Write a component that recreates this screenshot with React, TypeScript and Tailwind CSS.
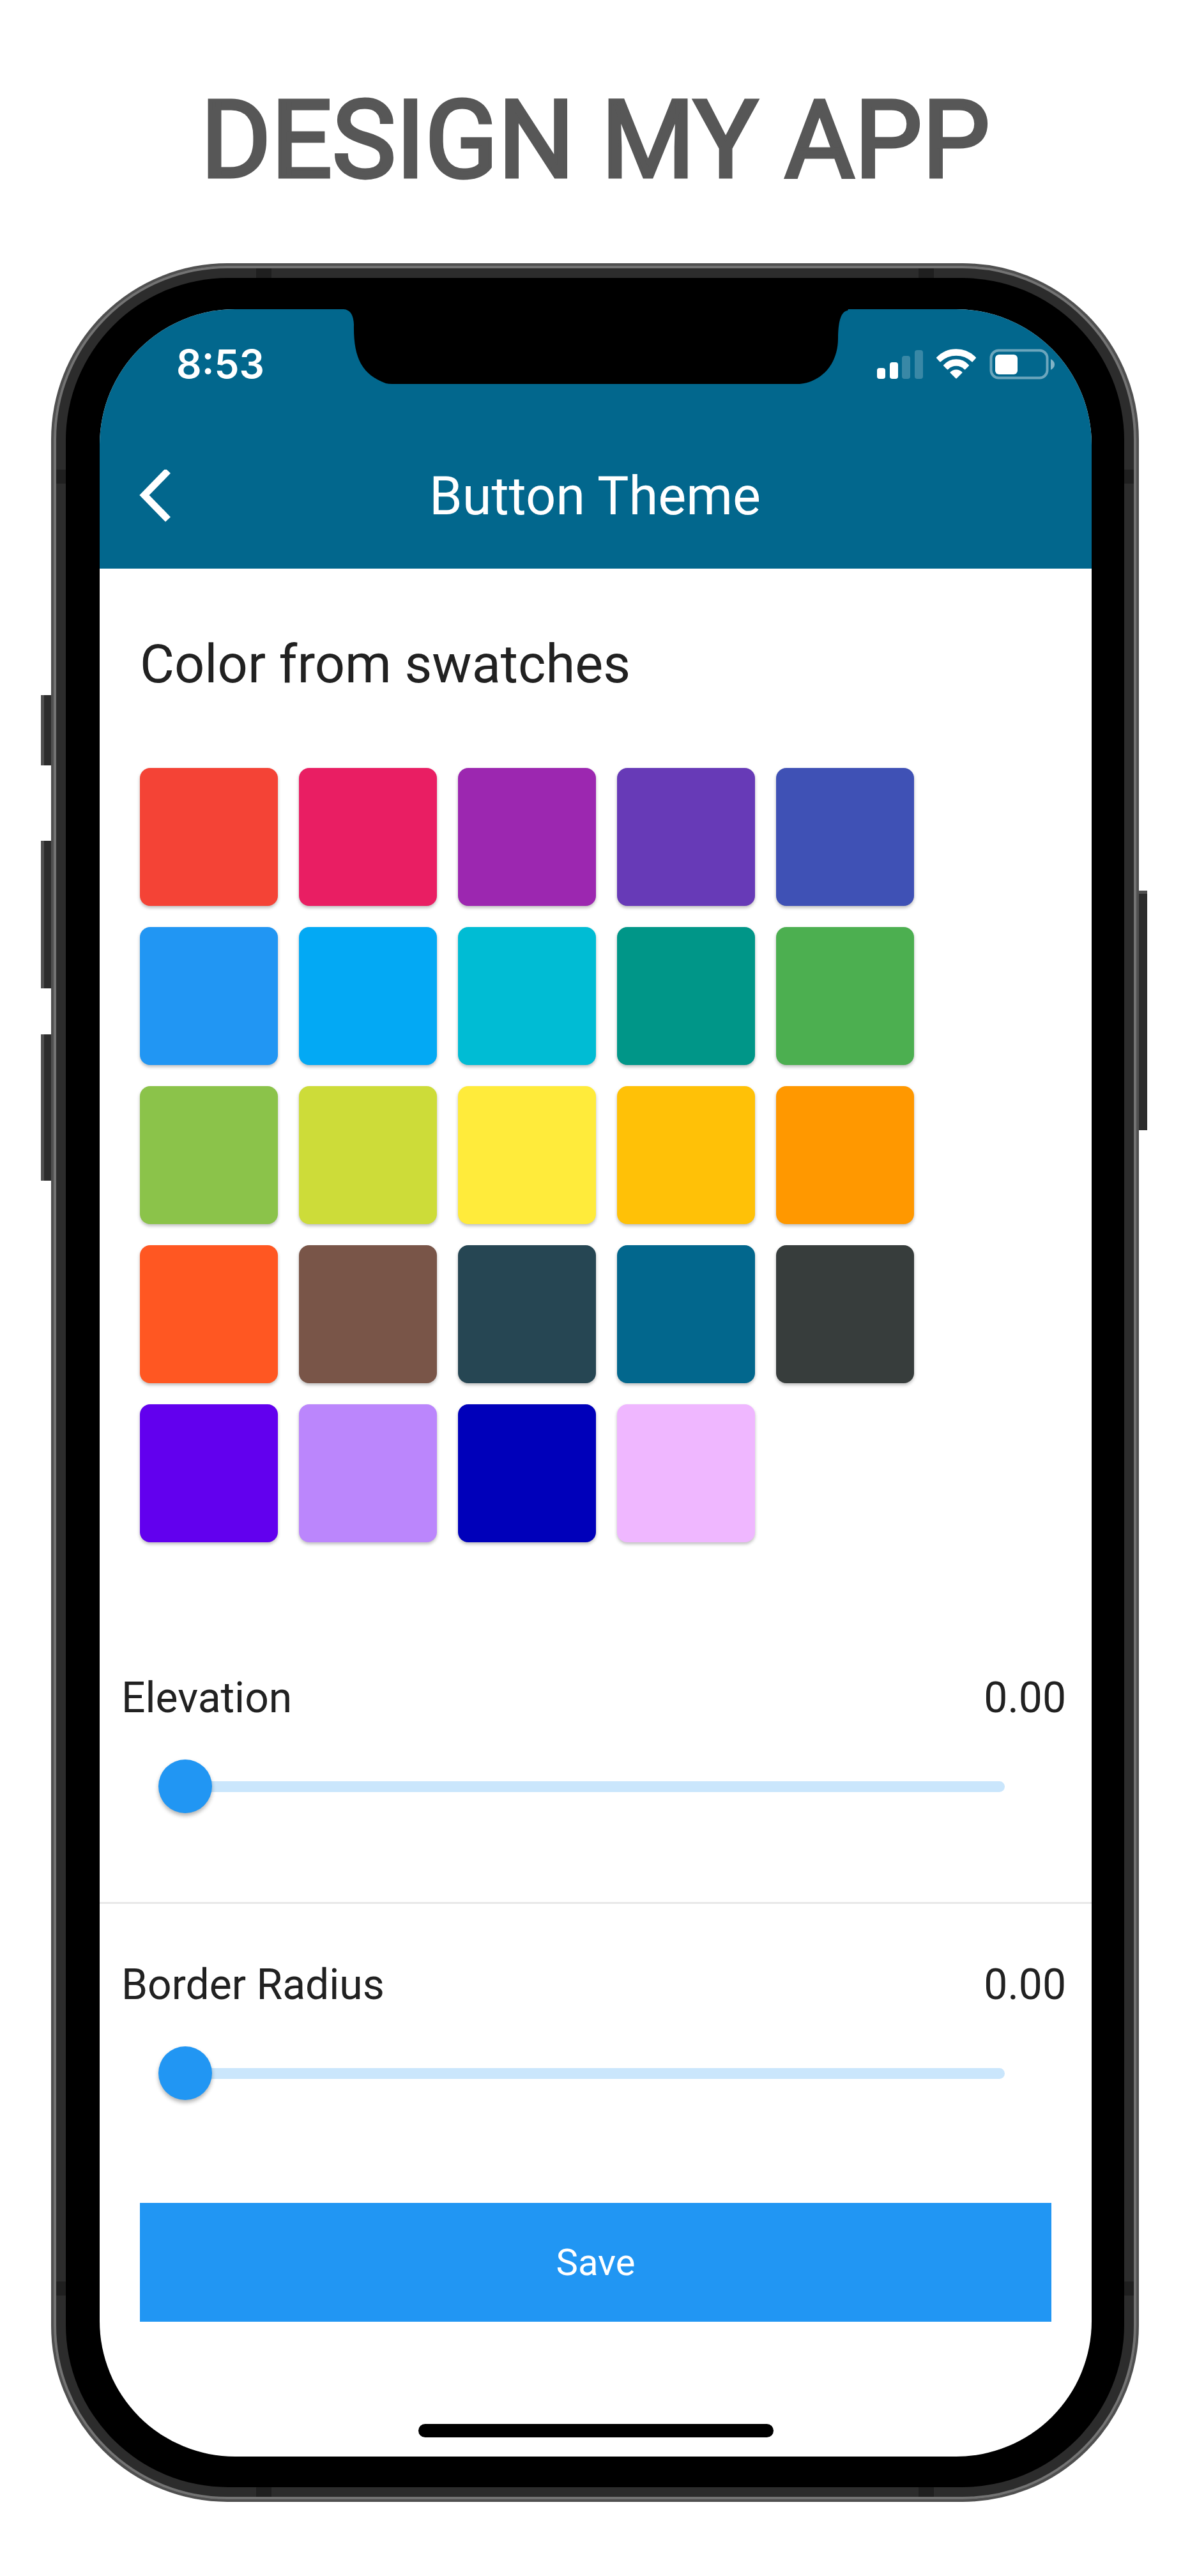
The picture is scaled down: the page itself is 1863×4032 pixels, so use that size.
import { useState } from "react";

const swatches = [
  { name: "Red", bg: "bg-[#f44336]" },
  { name: "Pink", bg: "bg-[#e91e63]" },
  { name: "Purple", bg: "bg-[#9c27b0]" },
  { name: "Deep purple", bg: "bg-[#673ab7]" },
  { name: "Indigo", bg: "bg-[#3f51b5]" },
  { name: "Blue", bg: "bg-[#2196f3]" },
  { name: "Light blue", bg: "bg-[#03a9f4]" },
  { name: "Cyan", bg: "bg-[#00bcd4]" },
  { name: "Teal", bg: "bg-[#009688]" },
  { name: "Green", bg: "bg-[#4caf50]" },
  { name: "Light green", bg: "bg-[#8bc34a]" },
  { name: "Lime", bg: "bg-[#cddc39]" },
  { name: "Yellow", bg: "bg-[#ffeb3b]" },
  { name: "Amber", bg: "bg-[#ffc107]" },
  { name: "Orange", bg: "bg-[#ff9800]" },
  { name: "Deep orange", bg: "bg-[#ff5722]" },
  { name: "Brown", bg: "bg-[#795548]" },
  { name: "Slate", bg: "bg-[#264653]" },
  { name: "Ocean", bg: "bg-[#02678d]" },
  { name: "Charcoal", bg: "bg-[#373d3c]" },
  { name: "Violet", bg: "bg-[#6200ee]" },
  { name: "Lavender", bg: "bg-[#bb86fc]" },
  { name: "Navy", bg: "bg-[#0000ba]" },
  { name: "Orchid", bg: "bg-[#efb7ff]" },
];

function StatusIcons() {
  return (
    <svg width="279" height="48" viewBox="0 0 279 48" fill="white" aria-hidden="true">
      <rect x="0" y="30" width="13" height="17" rx="4" />
      <rect x="20" y="21" width="13" height="26" rx="4" />
      <rect x="39" y="11" width="13" height="36" rx="4" opacity="0.22" />
      <rect x="59" y="2" width="13" height="45" rx="4" opacity="0.22" />
      <g stroke="white" strokeWidth="2" strokeLinejoin="round">
        <path d="M94 14 A41.500 41.500 0 0 1 154 14 L149 19.500 A37 37 0 0 0 99 19.500 Z" />
        <path d="M105 26 A25 25 0 0 1 143 26 L137.500 31.500 A18.500 18.500 0 0 0 110.500 31.500 Z" />
        <path d="M115.500 37 A12 12 0 0 1 132.500 37 L124 45.500 Z" />
      </g>
      <rect x="178.500" y="2.500" width="88" height="43" rx="12" fill="none" stroke="white" strokeWidth="4" opacity="0.42" />
      <rect x="185" y="9" width="35" height="31" rx="6" />
      <path d="M272 16 Q278 19 278 24.500 Q278 30 272 33 Z" opacity="0.5" />
    </svg>
  );
}

function SliderRow({ id, label }: { id: string; label: string }) {
  const [value, setValue] = useState(0);
  return (
    <div className="px-8 pt-[85px] text-[#212121]">
      <div className="flex items-center justify-between pr-2 pl-0.5 text-[66px] leading-[84px]">
        <label htmlFor={id}>{label}</label>
        <output htmlFor={id}>{value.toFixed(2)}</output>
      </div>
      <div className="mt-[54px] mr-[104px] ml-[60px] grid items-center">
        <div className="col-start-1 row-start-1 ml-4 h-[17px] rounded-full bg-[#cae6fc]" />
        <input
          id={id}
          type="range"
          min={0}
          max={50}
          step={0.5}
          value={value}
          onChange={(e) => setValue(Number(e.target.value))}
          className="col-start-1 row-start-1 h-[84px] w-full cursor-pointer appearance-none bg-transparent [&::-webkit-slider-thumb]:size-[84px] [&::-webkit-slider-thumb]:appearance-none [&::-webkit-slider-thumb]:rounded-full [&::-webkit-slider-thumb]:bg-[#2196f3] [&::-webkit-slider-thumb]:shadow-[0_4px_6px_rgba(0,0,0,0.3)]"
        />
      </div>
    </div>
  );
}

function Notch() {
  return (
    <svg width="790" height="117" viewBox="0 0 790 117" aria-hidden="true">
      <path
        d="M0 0 Q15 1 16 24 C15 75 28 102 66 116 Q70 117 76 117 H714 C752 113 774 82 774 46 Q774 4 789 2 L790 0 Z"
        fill="black"
      />
    </svg>
  );
}

/* Antenna lines across the metal band, two on every side. */
function AntennaLines() {
  return (
    <>
      <div className="absolute inset-x-0 top-0 flex justify-between px-[313px]">
        <span className="h-4 w-6 bg-[#1f1f1f]" />
        <span className="h-4 w-6 bg-[#1f1f1f]" />
      </div>
      <div className="absolute inset-x-0 bottom-0 flex justify-between px-[313px]">
        <span className="h-4 w-6 bg-[#1f1f1f]" />
        <span className="h-4 w-6 bg-[#1f1f1f]" />
      </div>
      <div className="absolute inset-y-0 left-0 flex flex-col justify-between py-[315px]">
        <span className="h-[22px] w-4 bg-[#1f1f1f]" />
        <span className="h-[22px] w-4 bg-[#1f1f1f]" />
      </div>
      <div className="absolute inset-y-0 right-0 flex flex-col justify-between py-[315px]">
        <span className="h-[22px] w-4 bg-[#1f1f1f]" />
        <span className="h-[22px] w-4 bg-[#1f1f1f]" />
      </div>
    </>
  );
}

export default function App() {
  const [selected, setSelected] = useState("");
  return (
    <main className="flex min-h-screen flex-col bg-white pr-[67px] pb-[116px] pl-16 font-['Roboto',sans-serif]">
      <h1 className="pt-[118px] pb-[90px] pl-1 text-center text-[168px] leading-[204px] font-normal text-[#575757] [-webkit-text-stroke:5px_#575757]">
        DESIGN MY APP
      </h1>

      <div className="flex">
        <div className="flex w-4 flex-col pt-[676px]">
          <span className="h-[110px] border-l-[5px] border-[#505050] bg-[#2c2c2c]" />
          <span className="mt-[118px] h-[231px] border-l-[5px] border-[#505050] bg-[#2c2c2c]" />
          <span className="mt-[72px] h-[229px] border-l-[5px] border-[#505050] bg-[#2c2c2c]" />
        </div>

        <div className="flex-1 rounded-[276px] border-4 border-[#505050] bg-[#2c2c2c]">
          <div className="relative rounded-[272px] border-4 border-[#737373] p-[15px]">
            <AntennaLines />

            <div className="relative rounded-[254px] bg-black pt-[49px] pr-[51px] pb-[48px] pl-[53px]">
              <div className="overflow-hidden rounded-[212px] bg-white">
                <header className="bg-[#02678d] text-white">
                  <div className="relative flex h-[168px] items-center justify-between pt-1 pr-[57px] pl-[120px]">
                    <time className="font-['Inter',sans-serif] text-[62px] leading-none font-semibold">8:53</time>
                    <StatusIcons />
                    <div className="absolute inset-x-0 top-0 flex justify-center">
                      <Notch />
                    </div>
                  </div>
                  <div className="grid h-[238px] grid-cols-[1fr_auto_1fr] items-center pt-3 pr-16 pl-[62px]">
                    <button type="button" aria-label="Back" className="w-12">
                      <svg width="50" height="84" viewBox="0 0 50 84" fill="none" aria-hidden="true">
                        <path d="M45 2 L8 40 L45 78" stroke="white" strokeWidth="11" />
                      </svg>
                    </button>
                    <h2 className="text-[83px] leading-[100px]">Button Theme</h2>
                  </div>
                </header>

                <section className="px-[63px] pt-[100px]">
                  <h3 className="text-[83px] leading-[100px] text-[#212121]">Color from swatches</h3>
                  <div className="flex max-w-[1250px] flex-wrap gap-[33px] pt-[112px]">
                    {swatches.map((s) => (
                      <button
                        key={s.name}
                        type="button"
                        aria-label={s.name}
                        aria-pressed={selected === s.name}
                        onClick={() => setSelected(s.name)}
                        className={`size-[216px] rounded-2xl shadow-[0_3px_5px_rgba(0,0,0,0.25)] ${s.bg}`}
                      />
                    ))}
                  </div>
                </section>

                <div className="pt-[117px]">
                  <SliderRow id="elevation" label="Elevation" />
                  <hr className="mt-[139px] border-t-[3px] border-[#e8e8e8]" />
                  <SliderRow id="radius" label="Border Radius" />
                </div>

                <div className="px-[63px] pt-[161px] pb-[160px]">
                  <button type="button" className="h-[186px] w-full bg-[#2196f3] text-[58px] font-normal text-white">
                    Save
                  </button>
                </div>
                <div className="mx-auto mb-[30px] h-[21px] w-[556px] rounded-full bg-black" />
              </div>
            </div>
          </div>
        </div>

        <div className="w-[13px] pt-[982px]">
          <div className="h-[375px] border-t-[5px] border-[#505050] bg-[#2c2c2c]" />
        </div>
      </div>
    </main>
  );
}
